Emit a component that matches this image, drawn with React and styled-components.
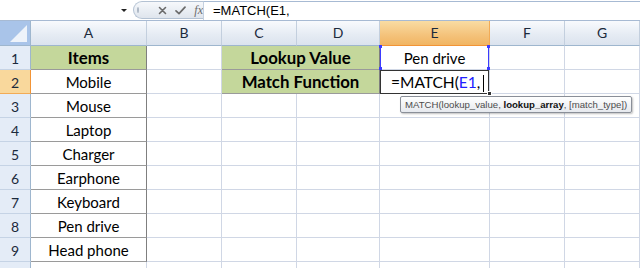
import React from "react";
import styled, { createGlobalStyle, css } from "styled-components";

const GlobalStyle = createGlobalStyle`
  html, body {
    margin: 0;
    padding: 0;
    background: #ffffff;
    overflow: hidden;
  }
  body {
    font-family: Lato, "Open Sans", sans-serif;
  }
`;

const COLS = [
  { key: "A", width: 116 },
  { key: "B", width: 75 },
  { key: "C", width: 75 },
  { key: "D", width: 83 },
  { key: "E", width: 110 },
  { key: "F", width: 75 },
  { key: "G", width: 75 },
];

const items = [
  "Items",
  "Mobile",
  "Mouse",
  "Laptop",
  "Charger",
  "Earphone",
  "Keyboard",
  "Pen drive",
  "Head phone",
];

const Page = styled.div`
  position: relative;
  width: 640px;
  height: 268px;
  overflow: hidden;
  background: #fff;
`;

const FormulaBar = styled.div`
  display: flex;
  align-items: stretch;
  height: 21px;
  box-sizing: border-box;
  border-bottom: 1px solid #a7bad3;
  background: #fff;
`;

const NameBox = styled.div`
  width: 133px;
  display: flex;
  align-items: center;
  justify-content: flex-end;
  padding-right: 6px;
  box-sizing: border-box;
`;

const DropArrow = styled.span`
  width: 0;
  height: 0;
  border-left: 3px solid transparent;
  border-right: 3px solid transparent;
  border-top: 3px solid #222;
  margin-top: 1px;
`;

const ButtonPill = styled.div`
  width: 70px;
  height: 18px;
  margin-top: 1px;
  box-sizing: border-box;
  display: flex;
  align-items: center;
  gap: 8px;
  padding-left: 3px;
  border: 1px solid #b4c2d3;
  border-right: none;
  border-radius: 10px 0 0 10px;
  background: linear-gradient(#f6f8fb, #dfe5ed);
`;

const Grip = styled.span`
  width: 4px;
  height: 4px;
  border-radius: 50%;
  background: #c8d0da;
  border: 1px solid #aeb8c5;
  margin-right: 11px;
`;

const BarIcon = styled.span`
  display: flex;
  align-items: center;
  color: #6b6b6b;
  font-family: "Liberation Serif", serif;
  font-style: italic;
  font-size: 12px;
`;

const FormulaInput = styled.div`
  flex: 1;
  margin-top: 1px;
  border-top: 1px solid #a7bad3;
  border-left: 1px solid #c5d1e0;
  padding-left: 9px;
  font-family: "Liberation Sans", Arial, sans-serif;
  font-size: 13px;
  line-height: 17px;
  color: #000;
`;

const Sheet = styled.div`
  display: grid;
  grid-template-columns: 31px ${COLS.map((c) => `${c.width}px`).join(" ")};
  grid-template-rows: 25px repeat(10, 24px);
`;

const headerBase = css`
  box-sizing: border-box;
  display: flex;
  align-items: flex-end;
  justify-content: center;
  font-size: 14px;
  color: #1b2a3c;
`;

const Corner = styled.div`
  position: relative;
  box-sizing: border-box;
  background: #a9c4e9;
  border-right: 1px solid #9eb6ce;
  border-bottom: 1px solid #9eb6ce;
  overflow: hidden;

  &::after {
    content: "";
    position: absolute;
    right: 3px;
    bottom: 3px;
    border-left: 17px solid transparent;
    border-bottom: 17px solid #eef3fa;
  }
`;

const ColHeader = styled.div`
  ${headerBase}
  padding-bottom: 4px;
  background: ${(p) =>
    p.$active
      ? "linear-gradient(#f9dca3, #f4c27a 60%, #f1b562)"
      : "linear-gradient(#f8fafd, #e6ecf4 55%, #dbe3ee)"};
  border-right: 1px solid ${(p) => (p.$active ? "#f2ab56" : "#c3cfde")};
  border-bottom: 1px solid ${(p) => (p.$active ? "#f29436" : "#9eb6ce")};
`;

const RowHeader = styled.div`
  ${headerBase}
  padding-bottom: 2px;
  background: ${(p) => (p.$active ? "#f9d89c" : "#e4ecf7")};
  border-right: 1px solid ${(p) => (p.$active ? "#f29436" : "#9eb6ce")};
  border-bottom: 1px solid ${(p) => (p.$active ? "#f2ab56" : "#c5d3e5")};
`;

const Cell = styled.div`
  position: relative;
  box-sizing: border-box;
  display: flex;
  align-items: flex-end;
  justify-content: center;
  padding-bottom: ${(p) => (p.$bold ? "1px" : "2px")};
  font-size: ${(p) => (p.$bold ? "16.8px" : "15px")};
  color: #000;
  white-space: nowrap;
  grid-column: ${(p) => (p.$span ? `span ${p.$span}` : "auto")};
  background: ${(p) => (p.$green ? "#c4d79b" : "#fff")};
  font-weight: ${(p) => (p.$bold ? 700 : 400)};
  border-right: 1px solid ${(p) => (p.$boxed ? "#7f7f7f" : "#d0d7e5")};
  border-bottom: 1px solid ${(p) => (p.$boxed ? "#9a9a9a" : "#d0d7e5")};
  ${(p) =>
    p.$ref &&
    css`
      box-shadow: inset 1px 0 0 #3b3bff, inset -1px 0 0 #3b3bff;
    `}
  ${(p) =>
    p.$editing &&
    css`
      justify-content: flex-start;
      padding-left: 11px;
      font-size: 15.5px;
      box-shadow: inset 1px 0 0 #333, inset -1px 0 0 #333,
        inset 0 1px 0 #333;
      border-bottom-color: #333;
    `}
`;

const RefMark = styled.span`
  position: absolute;
  width: 3px;
  height: 3px;
  background: #3b3bff;
  ${(p) => p.$top && "top: -1px;"}
  ${(p) => p.$bottom && "bottom: -1px;"}
  ${(p) => (p.$left ? "left: -1px;" : "right: -1px;")}
`;

const FillHandle = styled.span`
  position: absolute;
  right: -3px;
  bottom: -3px;
  width: 5px;
  height: 5px;
  background: #333;
  border: 1px solid #fff;
  box-sizing: border-box;
  z-index: 2;
`;

const RefText = styled.span`
  color: #2020ff;
`;

const Caret = styled.span`
  display: inline-block;
  width: 1px;
  height: 17px;
  background: #000;
  margin-left: 3px;
  margin-bottom: -1px;
`;

const Tooltip = styled.div`
  position: absolute;
  left: 400px;
  top: 96px;
  height: 17px;
  box-sizing: border-box;
  padding: 0 4px;
  display: flex;
  align-items: center;
  font-family: "Liberation Sans", Arial, sans-serif;
  font-size: 9.6px;
  color: #4c4c4c;
  background: linear-gradient(#ffffff, #e6e9ee);
  border: 1px solid #8a8f98;
  border-radius: 2px;
  box-shadow: 1px 1px 2px rgba(0, 0, 0, 0.25);
  white-space: nowrap;

  b {
    color: #111;
  }
`;

function CrossIcon() {
  return (
    <svg width="9" height="9" viewBox="0 0 9 9">
      <path d="M1.5 1.5 L7.5 7.5 M7.5 1.5 L1.5 7.5" stroke="#6a6a6a" strokeWidth="1.6" strokeLinecap="round" />
    </svg>
  );
}

function CheckIcon() {
  return (
    <svg width="11" height="9" viewBox="0 0 11 9">
      <path d="M1 4.8 L4 7.6 L10 1.2" stroke="#6a6a6a" strokeWidth="1.7" fill="none" strokeLinecap="round" strokeLinejoin="round" />
    </svg>
  );
}

function cellFor(col, row) {
  const key = `${col}${row}`;
  if (col === "A" && row <= 9) {
    return (
      <Cell key={key} $boxed $green={row === 1} $bold={row === 1}>
        {items[row - 1]}
      </Cell>
    );
  }
  if (col === "C" && row === 1) {
    return (
      <Cell key={key} $span={2} $boxed $green $bold>
        Lookup Value
      </Cell>
    );
  }
  if (col === "C" && row === 2) {
    return (
      <Cell key={key} $span={2} $boxed $green $bold>
        Match Function
      </Cell>
    );
  }
  if (col === "D" && row <= 2) return null;
  if (col === "E" && row === 1) {
    return (
      <Cell key={key} $ref>
        Pen drive
        <RefMark $top $left />
        <RefMark $top />
        <RefMark $bottom $left />
        <RefMark $bottom />
      </Cell>
    );
  }
  if (col === "E" && row === 2) {
    return (
      <Cell key={key} $editing>
        =MATCH(<RefText>E1</RefText>,<Caret />
        <FillHandle />
      </Cell>
    );
  }
  return <Cell key={key} />;
}

export default function App() {
  // row 10 is only a sliver at the bottom edge, its number sits below the fold
  const rows = Array.from({ length: 10 }, (_, i) => i + 1);

  return (
    <Page>
      <GlobalStyle />
      <FormulaBar>
        <NameBox>
          <DropArrow />
        </NameBox>
        <ButtonPill>
          <Grip />
          <BarIcon>
            <CrossIcon />
          </BarIcon>
          <BarIcon>
            <CheckIcon />
          </BarIcon>
          <BarIcon>fx</BarIcon>
        </ButtonPill>
        <FormulaInput>=MATCH(E1,</FormulaInput>
      </FormulaBar>

      <Sheet>
        <Corner />
        {COLS.map((c) => (
          <ColHeader key={c.key} $active={c.key === "E"}>
            {c.key}
          </ColHeader>
        ))}
        {rows.map((r) => (
          <React.Fragment key={r}>
            <RowHeader $active={r === 2}>{r < 10 ? r : ""}</RowHeader>
            {COLS.map((c) => cellFor(c.key, r))}
          </React.Fragment>
        ))}
      </Sheet>

      <Tooltip>
        MATCH(lookup_value,&nbsp;<b>lookup_array</b>, [match_type])
      </Tooltip>
    </Page>
  );
}
